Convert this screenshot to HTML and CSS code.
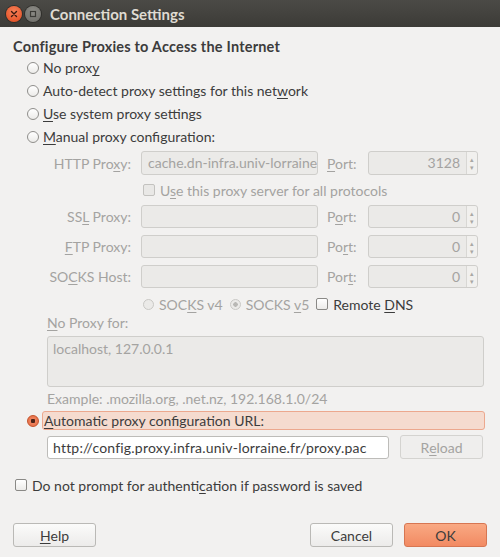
FILE: index.html
```html
<!DOCTYPE html>
<html>
<head>
<meta charset="utf-8">
<link rel="stylesheet" href="styles.css">
</head>
<body>
<div class="window">
  <div class="titlebar">
    <span class="wbtn close"><svg width="8" height="8" viewBox="0 0 8 8"><path d="M1.5 1.5 L6.5 6.5 M6.5 1.5 L1.5 6.5" stroke="#3a1a10" stroke-width="1.4" stroke-linecap="round"/></svg></span>
    <span class="wbtn min"><svg width="8" height="8" viewBox="0 0 8 8"><rect x="1.5" y="1.5" width="5" height="5" fill="none" stroke="#3b3a36" stroke-width="1.2"/></svg></span>
    <span class="title">Connection Settings</span>
  </div>
  <div class="content">
    <div class="heading">Configure Proxies to Access the Internet</div>
    <div class="radios">
      <div class="row"><span class="radio"></span><span>No prox<u>y</u></span></div>
      <div class="row"><span class="radio"></span><span>Auto-detect proxy settings for this net<u>w</u>ork</span></div>
      <div class="row"><span class="radio"></span><span><u>U</u>se system proxy settings</span></div>
      <div class="row"><span class="radio"></span><span><u>M</u>anual proxy configuration:</span></div>
    </div>
    <div class="grid">
      <span class="lbl">HTTP Pro<u>x</u>y:</span>
      <div class="field"><span class="ftext">cache.dn-infra.univ-lorraine</span></div>
      <span class="plbl"><u>P</u>ort:</span>
      <div class="port"><span class="pval">3128</span><span class="spin"><i>&#9652;</i><i>&#9662;</i></span></div>

      <div class="checkrow"><span class="cbox dis"></span><span>U<u>s</u>e this proxy server for all protocols</span></div>

      <span class="lbl">SS<u>L</u> Proxy:</span>
      <div class="field"></div>
      <span class="plbl">P<u>o</u>rt:</span>
      <div class="port"><span class="pval">0</span><span class="spin"><i>&#9652;</i><i>&#9662;</i></span></div>

      <span class="lbl"><u>F</u>TP Proxy:</span>
      <div class="field"></div>
      <span class="plbl">Po<u>r</u>t:</span>
      <div class="port"><span class="pval">0</span><span class="spin"><i>&#9652;</i><i>&#9662;</i></span></div>

      <span class="lbl">SO<u>C</u>KS Host:</span>
      <div class="field"></div>
      <span class="plbl">Por<u>t</u>:</span>
      <div class="port"><span class="pval">0</span><span class="spin"><i>&#9652;</i><i>&#9662;</i></span></div>

      <div class="socksrow">
        <span class="opt dis"><span class="radio dis"></span><span>SOC<u>K</u>S v4</span></span>
        <span class="opt dis"><span class="radio dis on"></span><span>SOCKS <u>v</u>5</span></span>
        <span class="opt"><span class="cbox"></span><span>Remote <u>D</u>NS</span></span>
      </div>
    </div>
    <div class="indent">
      <div class="noproxy dis"><u>N</u>o Proxy for:</div>
      <div class="textarea">localhost, 127.0.0.1</div>
      <div class="example">Example: .mozilla.org, .net.nz, 192.168.1.0/24</div>
    </div>
    <div class="autorow">
      <span class="radio sel"></span>
      <span class="autolbl"><u>A</u>utomatic proxy configuration URL:</span>
    </div>
    <div class="urlrow">
      <div class="url">http://config.proxy.infra.univ-lorraine.fr/proxy.pac</div>
      <div class="btn disbtn">R<u>e</u>load</div>
    </div>
    <div class="authrow"><span class="cbox"></span><span>Do not prompt for authenti<u>c</u>ation if password is saved</span></div>
    <div class="buttons">
      <div class="btn"><u>H</u>elp</div>
      <div class="spacer"></div>
      <div class="btn">Cancel</div>
      <div class="btn ok">OK</div>
    </div>
  </div>
</div>
</body>
</html>
```

FILE: styles.css
```css
html, body {
  margin: 0;
  padding: 0;
}
body {
  width: 500px;
  height: 557px;
  overflow: hidden;
  background: #f2f1f0;
  font-family: Lato, "Open Sans", sans-serif;
  font-size: 14px;
  color: #3c3c3c;
}
u { text-decoration: underline; text-underline-offset: 2px; }

.titlebar {
  height: 27px;
  background: linear-gradient(#4b4a46, #3c3b37);
  display: flex;
  align-items: center;
  padding-left: 6px;
  box-sizing: border-box;
}
.wbtn {
  width: 16px;
  height: 16px;
  border-radius: 50%;
  display: flex;
  align-items: center;
  justify-content: center;
  margin-right: 2px;
}
.wbtn.close {
  background: radial-gradient(circle at 50% 35%, #f7825a, #e1481c);
  box-shadow: 0 0 0 1px #2f2e2b;
}
.wbtn.min {
  background: radial-gradient(circle at 50% 35%, #8d8c87, #6c6b66);
  box-shadow: 0 0 0 1px #2f2e2b;
  margin-left: 1px;
}
.title {
  color: #dfdbd2;
  font-weight: bold;
  font-size: 15px;
  margin-left: 7px;
}

.content {
  padding: 0 13px;
}
.heading {
  margin-top: 10px;
  height: 19px;
  line-height: 19px;
  font-weight: bold;
  font-size: 14.5px;
  letter-spacing: 0.2px;
}
.row {
  height: 23px;
  display: flex;
  align-items: center;
}
.radio {
  width: 11px;
  height: 11px;
  border-radius: 50%;
  border: 1px solid #8f8e8b;
  background: linear-gradient(#ffffff, #ecebe9);
  display: inline-block;
  margin-left: 14px;
  margin-right: 4px;
  box-sizing: border-box;
  flex: none;
}
.radios .radio { width: 12px; height: 12px; }

.grid {
  margin-top: 3px;
  display: grid;
  grid-template-columns: 118px 177px 30px 110px;
  column-gap: 10px;
  grid-template-rows: 24px 16px 23px 23px 23px 18px;
  row-gap: 7px;
  align-items: center;
}
.dis, .lbl, .plbl { color: #a4a3a1; }
.lbl { text-align: right; white-space: nowrap; }
.plbl { white-space: nowrap; margin-left: -1px; }
.field {
  height: 23px;
  box-sizing: border-box;
  border: 1px solid #cfcecb;
  border-radius: 3px;
  background: #ebeae8;
  overflow: hidden;
  white-space: nowrap;
  padding-left: 6px;
  line-height: 21px;
  color: #a4a3a1;
  align-self: stretch;
}
.ftext {
  display: block;
  overflow: hidden;
  white-space: nowrap;
}
.grid > .field:nth-child(2) { height: 24px; line-height: 22px; }
.port {
  display: flex;
  height: 23px;
  box-sizing: border-box;
  border: 1px solid #cfcecb;
  border-radius: 3px;
  background: #ebeae8;
}
.grid > .port:nth-child(4) { height: 24px; }
.pval {
  flex: 1;
  text-align: right;
  padding-right: 6px;
  color: #a4a3a1;
  line-height: 21px;
  border-right: 1px solid #d8d7d4;
}
.spin {
  width: 10px;
  display: flex;
  flex-direction: column;
  justify-content: center;
  align-items: center;
  background: #f1f0ee;
  border-radius: 0 3px 3px 0;
}
.spin i {
  font-style: normal;
  font-size: 7px;
  line-height: 8px;
  color: #a9a8a5;
}
.checkrow {
  grid-column: 2 / 5;
  display: flex;
  align-items: center;
  color: #a4a3a1;
  padding-left: 2px;
}
.cbox {
  width: 10px;
  height: 10px;
  border: 1px solid #8a8986;
  border-radius: 2px;
  background: linear-gradient(#ffffff, #ecebe9);
  display: inline-block;
  flex: none;
  margin-right: 5px;
}
.cbox.dis {
  border-color: #c3c2bf;
  background: #e9e8e6;
}
.socksrow {
  grid-column: 2 / 5;
  display: flex;
  align-items: center;
  padding-left: 2px;
}
.opt {
  display: flex;
  align-items: center;
  margin-right: 7px;
}
.opt .radio { margin-left: 0; margin-right: 5px; }
.radio.dis {
  border-color: #c9c8c5;
  background: #ebeae8;
}
.radio.on {
  background: radial-gradient(circle, #b9b8b5 0 2px, #ebeae8 2.5px);
}
.opt .cbox { margin-right: 5px; }

.indent { padding-left: 34px; }
.noproxy {
  margin-top: 1px;
  height: 17px;
  line-height: 17px;
}
.textarea {
  margin-top: 5px;
  height: 51px;
  box-sizing: border-box;
  border: 1px solid #cfcecb;
  border-radius: 3px;
  background: #ebeae8;
  color: #a4a3a1;
  padding: 3px 0 0 5px;
  width: 437px;
}
.example {
  margin-top: 4px;
  height: 16px;
  line-height: 16px;
  color: #a4a3a1;
}
.autorow {
  margin-top: 4px;
  height: 19px;
  display: flex;
  align-items: center;
}
.radio.sel {
  border: 1px solid #c4532b;
  background: radial-gradient(circle, #4a2318 0 2px, #f0825d 2.5px, #e2683f);
  width: 12px;
  height: 12px;
  margin-right: 3px;
}
.autolbl {
  flex: none;
  width: 443px;
  height: 19px;
  box-sizing: border-box;
  border: 1px solid #eca88e;
  border-radius: 3px;
  background: #f5dbcf;
  line-height: 17px;
  padding-left: 1px;
}
.urlrow {
  margin-top: 5px;
  display: flex;
  align-items: center;
  padding-left: 34px;
}
.url {
  width: 342px;
  height: 23px;
  box-sizing: border-box;
  border: 1px solid #bdbcb9;
  border-radius: 3px;
  background: #ffffff;
  line-height: 21px;
  padding-left: 5px;
  white-space: nowrap;
  overflow: hidden;
  letter-spacing: 0.2px;
}
.btn {
  width: 83px;
  height: 24px;
  box-sizing: border-box;
  border: 1px solid #bab9b6;
  border-radius: 3px;
  background: linear-gradient(#fbfbfa, #ecebea);
  display: flex;
  align-items: center;
  justify-content: center;
  flex: none;
}
.disbtn {
  margin-left: 11px;
  color: #a4a3a1;
  border-color: #d4d3d0;
  background: #efeeed;
}
.authrow {
  margin-top: 18px;
  height: 16px;
  display: flex;
  align-items: center;
}
.authrow .cbox { margin-left: 2px; margin-right: 5px; }
.buttons {
  margin-top: 30px;
  display: flex;
}
.spacer { flex: 1; }
.buttons .ok {
  margin-left: 11px;
  background: linear-gradient(#f9a983, #f28a62);
  border-color: #d77652;
}
```
